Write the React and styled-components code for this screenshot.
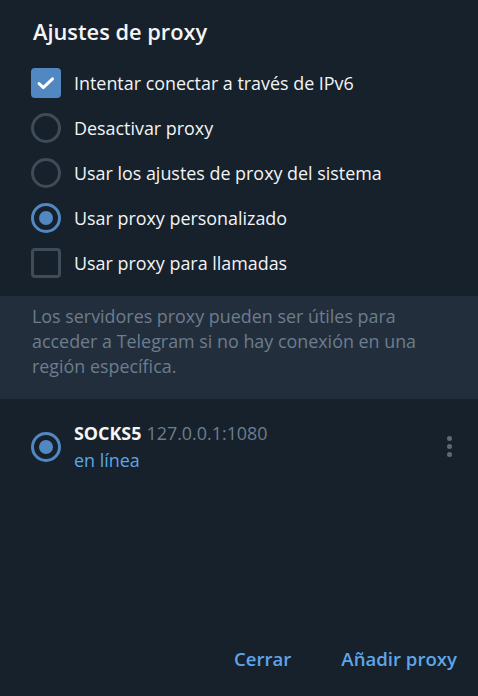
import React from "react";
import styled, { createGlobalStyle } from "styled-components";

const Global = createGlobalStyle`
  html, body { margin: 0; padding: 0; background: #17212b; }
  body { font-family: "Open Sans", "Noto Sans", sans-serif; -webkit-font-smoothing: antialiased; }
  * { box-sizing: border-box; }
`;

const Panel = styled.div`
  width: 478px;
  height: 696px;
  background: #17212b;
  display: flex;
  flex-direction: column;
  overflow: hidden;
`;

const Title = styled.h2`
  margin: 0;
  padding: 18px 0 0 33px;
  font-size: 21.8px;
  line-height: 27px;
  font-weight: 600;
  color: #f5f5f5;
`;

const Options = styled.div`
  display: flex;
  flex-direction: column;
  padding: 15.5px 0 10.5px 31px;
`;

const Row = styled.label`
  display: flex;
  align-items: center;
  height: 45px;
  gap: 13px;
  font-size: 17.9px;
  line-height: 24px;
  color: #f2f4f6;
  cursor: pointer;
`;

const CheckBox = styled.span`
  width: 30px;
  height: 30px;
  flex: none;
  border-radius: 4px;
  display: flex;
  align-items: center;
  justify-content: center;
  background: ${(p) => (p.$checked ? "#5288c1" : "transparent")};
  border: ${(p) => (p.$checked ? "none" : "3px solid #3e4b59")};
`;

const Radio = styled.span`
  width: 30px;
  height: 30px;
  flex: none;
  border-radius: 50%;
  border: 3px solid ${(p) => (p.$checked ? "#5288c1" : "#3e4b59")};
  display: flex;
  align-items: center;
  justify-content: center;
  &::after {
    content: "";
    width: 14px;
    height: 14px;
    border-radius: 50%;
    background: ${(p) => (p.$checked ? "#5288c1" : "transparent")};
  }
`;

const Info = styled.div`
  background: #232e3c;
  padding: 8px 24px 20px 32px;
  font-size: 17.9px;
  line-height: 25px;
  color: #6c7d8e;
`;

const ProxyList = styled.div`
  padding: 22px 0 0 31px;
  display: flex;
  flex-direction: column;
`;

const ProxyRow = styled.div`
  display: flex;
  align-items: center;
  gap: 13px;
  padding-right: 26px;
`;

const ProxyText = styled.div`
  flex: 1;
  display: flex;
  flex-direction: column;
  gap: 3px;
  font-size: 17.9px;
  line-height: 24px;
`;

const ProxyName = styled.div`
  color: #6c7d8e;
  & b {
    color: #f5f5f5;
    font-weight: 700;
    margin-right: 5px;
  }
`;

const Status = styled.div`
  color: #5ea5e8;
`;

const MoreButton = styled.button`
  background: none;
  border: none;
  padding: 0;
  display: flex;
  flex-direction: column;
  gap: 3px;
  align-items: center;
  cursor: pointer;
  & span {
    width: 5px;
    height: 5px;
    border-radius: 50%;
    background: #5d6b79;
  }
`;

const Footer = styled.div`
  margin-top: auto;
  display: flex;
  justify-content: flex-end;
  gap: 26px;
  padding: 0 9px 17px 0;
`;

const TextButton = styled.button`
  background: none;
  border: none;
  padding: 8px 12px;
  font-family: inherit;
  font-size: 18.6px;
  line-height: 24px;
  font-weight: 600;
  color: #5ea5e8;
  cursor: pointer;
`;

const CheckMark = () => (
  <svg width="30" height="30" viewBox="0 0 30 30">
    <path d="M8 15.5 L12.3 19.6 L21.5 10.8" fill="none" stroke="#fff" strokeWidth="3" strokeLinecap="round" strokeLinejoin="round" />
  </svg>
);

export default function App() {
  const options = [
    { type: "check", checked: true, label: "Intentar conectar a través de IPv6" },
    { type: "radio", checked: false, label: "Desactivar proxy" },
    { type: "radio", checked: false, label: "Usar los ajustes de proxy del sistema" },
    { type: "radio", checked: true, label: "Usar proxy personalizado" },
    { type: "check", checked: false, label: "Usar proxy para llamadas" },
  ];
  return (
    <>
      <Global />
      <Panel>
        <Title>Ajustes de proxy</Title>
        <Options>
          {options.map((o) => (
            <Row key={o.label}>
              {o.type === "check" ? (
                <CheckBox $checked={o.checked}>{o.checked && <CheckMark />}</CheckBox>
              ) : (
                <Radio $checked={o.checked} />
              )}
              {o.label}
            </Row>
          ))}
        </Options>
        <Info>
          Los servidores proxy pueden ser útiles para acceder a Telegram si no hay conexión en una región específica.
        </Info>
        <ProxyList>
          <ProxyRow>
            <Radio $checked />
            <ProxyText>
              <ProxyName>
                <b>SOCKS5</b>127.0.0.1:1080
              </ProxyName>
              <Status>en línea</Status>
            </ProxyText>
            <MoreButton aria-label="Más">
              <span />
              <span />
              <span />
            </MoreButton>
          </ProxyRow>
        </ProxyList>
        <Footer>
          <TextButton>Cerrar</TextButton>
          <TextButton>Añadir proxy</TextButton>
        </Footer>
      </Panel>
    </>
  );
}
